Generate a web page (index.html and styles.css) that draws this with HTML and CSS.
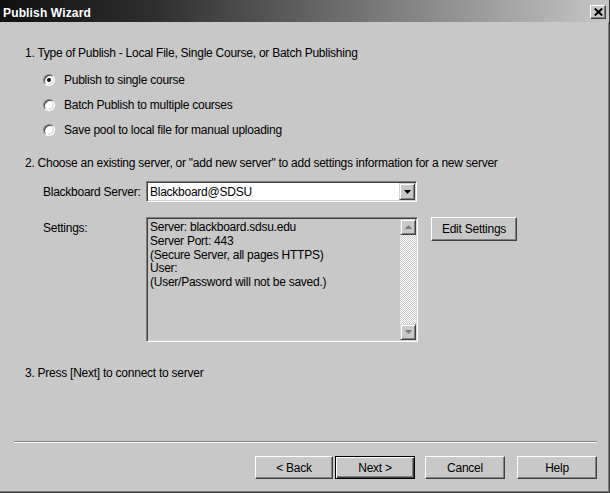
FILE: index.html
```html
<!DOCTYPE html>
<html>
<head>
<meta charset="utf-8">
<link rel="stylesheet" href="styles.css">
</head>
<body>
<div class="window">
  <div class="titlebar">
    <span class="title">Publish Wizard</span>
    <span class="close"><svg width="9" height="8" viewBox="0 0 9 8"><path d="M0.8 0.5 L8.2 7.5 M8.2 0.5 L0.8 7.5" stroke="#000" stroke-width="2" fill="none"/></svg></span>
  </div>
  <div class="content">
    <p class="step">1. Type of Publish - Local File, Single Course, or Batch Publishing</p>
    <div class="options">
      <div class="option"><span class="radio checked"></span>Publish to single course</div>
      <div class="option"><span class="radio"></span>Batch Publish to multiple courses</div>
      <div class="option"><span class="radio"></span>Save pool to local file for manual uploading</div>
    </div>
    <p class="step step2">2. Choose an existing server, or "add new server" to add settings information for a new server</p>
    <div class="form">
      <div class="label">Blackboard Server:</div>
      <div class="combo">
        <span class="combo-text">Blackboard@SDSU</span>
        <span class="sbtn"><svg width="7" height="4" viewBox="0 0 7 4"><polygon points="0,0 7,0 3.5,4" fill="#000"/></svg></span>
      </div>
      <div></div>
      <div class="label label-top">Settings:</div>
      <div class="textbox">
        <div class="text">Server: blackboard.sdsu.edu<br>Server Port: 443<br>(Secure Server, all pages HTTPS)<br>User:<br>(User/Password will not be saved.)</div>
        <div class="scroll">
          <span class="sbtn"><svg width="7" height="4" viewBox="0 0 7 4"><polygon points="0,4 7,4 3.5,0" fill="#7a7a7a"/></svg></span>
          <span class="track"></span>
          <span class="sbtn"><svg width="7" height="4" viewBox="0 0 7 4"><polygon points="0,0 7,0 3.5,4" fill="#7a7a7a"/></svg></span>
        </div>
      </div>
      <div class="btn edit">Edit Settings</div>
    </div>
    <p class="step step3">3. Press [Next] to connect to server</p>
  </div>
  <div class="footer">
    <div class="separator"></div>
    <div class="buttons">
      <div class="btn back">&lt; Back</div>
      <div class="btn wbtn next">Next &gt;</div>
      <div class="btn wbtn cancel">Cancel</div>
      <div class="btn wbtn">Help</div>
    </div>
  </div>
</div>
</body>
</html>
```
FILE: styles.css
```css
body {
  margin: 0;
  background: #fff;
  font-family: "Liberation Sans", Arial, sans-serif;
  font-size: 12px;
  letter-spacing: -0.25px;
  color: #000;
}

.window {
  width: 609px;
  height: 492px;
  background: #c8c8c8;
  display: flex;
  flex-direction: column;
  border-right: 1px solid #404040;
  border-bottom: 1px solid #404040;
  box-shadow: inset -1px -1px 0 #808080;
}

.titlebar {
  height: 22px;
  flex: none;
  display: flex;
  align-items: center;
  justify-content: space-between;
  padding: 0 3px;
  background: linear-gradient(to right, #101010, #2e2e2e 25%, #c6c6c6);
}

.title {
  color: #fff;
  font-weight: bold;
  letter-spacing: 0.15px;
  line-height: 14px;
  padding-top: 4px;
}

.close {
  width: 16px;
  height: 14px;
  margin-top: 2px;
  box-sizing: border-box;
  background: #c8c8c8;
  border: 1px solid;
  border-color: #fff #404040 #404040 #fff;
  box-shadow: inset -1px -1px 0 #808080;
  display: flex;
  align-items: center;
  justify-content: center;
}

.content {
  flex: 1;
  padding: 24px 0 0 25px;
}

.step {
  margin: 0;
  line-height: 14px;
}

.step2 { margin-top: 14px; }
.step3 { margin-top: 24px; }

.options {
  margin: 7px 0 0 18px;
}

.option {
  display: flex;
  align-items: center;
  height: 25px;
}

.radio {
  position: relative;
  width: 12px;
  height: 12px;
  box-sizing: border-box;
  border-radius: 50%;
  background: #fff;
  border: 1px solid;
  border-color: #808080 #fff #fff #808080;
  box-shadow: inset 1px 1px 0 #404040, inset -1px -1px 0 #d4d4d4;
  margin-right: 9px;
}

.radio.checked::after {
  content: "";
  position: absolute;
  left: 3px;
  top: 3px;
  width: 4px;
  height: 4px;
  border-radius: 50%;
  background: #000;
}

.form {
  display: grid;
  grid-template-columns: 103px 272px auto;
  row-gap: 15px;
  margin: 11px 0 0 18px;
}

.label {
  display: flex;
  align-items: center;
}

.label-top {
  align-items: flex-start;
  padding-top: 4px;
}

.combo {
  width: 271px;
  height: 21px;
  box-sizing: border-box;
  background: #fff;
  border: 1px solid;
  border-color: #808080 #fff #fff #808080;
  box-shadow: inset 1px 1px 0 #404040, inset -1px -1px 0 #d4d4d4;
  padding: 1px;
  display: flex;
  align-items: stretch;
}

.combo-text {
  flex: 1;
  display: flex;
  align-items: center;
  padding-left: 2px;
}

.sbtn {
  width: 16px;
  height: 16px;
  flex: none;
  box-sizing: border-box;
  background: #c8c8c8;
  border: 1px solid;
  border-color: #d4d4d4 #404040 #404040 #d4d4d4;
  box-shadow: inset 1px 1px 0 #fff, inset -1px -1px 0 #808080;
  display: flex;
  align-items: center;
  justify-content: center;
}

.combo .sbtn {
  height: auto;
}

.textbox {
  width: 272px;
  height: 125px;
  box-sizing: border-box;
  border: 1px solid;
  border-color: #808080 #fff #fff #808080;
  box-shadow: inset 1px 1px 0 #404040, inset -1px -1px 0 #d4d4d4;
  padding: 1px;
  display: flex;
}

.text {
  flex: 1;
  padding: 2px 2px;
  line-height: 13.75px;
}

.scroll {
  width: 16px;
  display: flex;
  flex-direction: column;
}

.track {
  flex: 1;
  background-color: #fff;
  background-image: repeating-conic-gradient(#c8c8c8 0 25%, #fff 0 50%);
  background-size: 2px 2px;
}

.btn {
  box-sizing: border-box;
  height: 23px;
  display: flex;
  align-items: center;
  justify-content: center;
  background: #c8c8c8;
  border: 1px solid;
  border-color: #fff #404040 #404040 #fff;
  box-shadow: inset -1px -1px 0 #808080;
}

.edit {
  width: 86px;
  height: 24px;
  align-self: start;
  margin-left: 13px;
}

.footer {
  flex: none;
  padding: 0 12px 13px 14px;
}

.separator {
  border-top: 1px solid #808080;
  border-bottom: 1px solid #fff;
}

.buttons {
  display: flex;
  justify-content: flex-end;
  margin-top: 13px;
}

.back {
  width: 78px;
  margin-right: 2px;
}

.wbtn { width: 80px; }

.next {
  margin-right: 10px;
  border-color: #000;
  box-shadow: inset 1px 1px 0 #fff, inset -1px -1px 0 #404040, inset -2px -2px 0 #808080;
}

.cancel { margin-right: 12px; }
```
